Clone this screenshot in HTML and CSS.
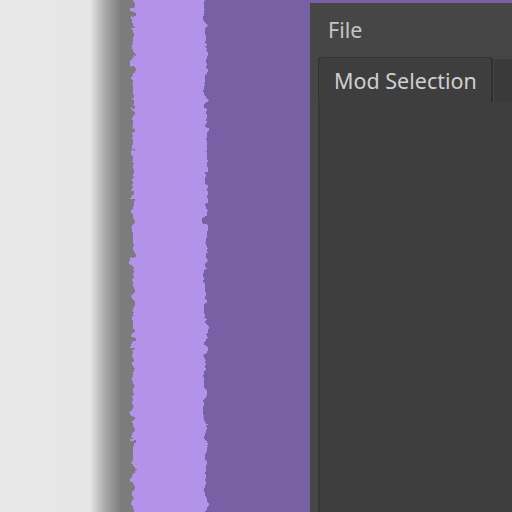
FILE: index.html
```html
<!DOCTYPE html>
<html>
<head>
<meta charset="utf-8">
<link rel="stylesheet" href="styles.css">
</head>
<body>
<div class="scene">
  <svg class="art" width="310" height="512" viewBox="0 0 310 512">
    <defs>
      <linearGradient id="sh" x1="0" y1="0" x2="310" y2="0" gradientUnits="userSpaceOnUse">
        <stop offset="0" stop-color="#e8e8e8"/>
        <stop offset="0.29" stop-color="#e6e6e6"/>
        <stop offset="0.34" stop-color="#a8a8a8"/>
        <stop offset="0.39" stop-color="#7c7c7c"/>
        <stop offset="1" stop-color="#7a7a7a"/>
      </linearGradient>
      <filter id="rough" x="-20%" y="-5%" width="140%" height="110%">
        <feTurbulence type="fractalNoise" baseFrequency="0.09 0.12" numOctaves="3" seed="4" result="n"/>
        <feDisplacementMap in="SourceGraphic" in2="n" scale="12" xChannelSelector="R" yChannelSelector="G"/>
      </filter>
    </defs>
    <rect x="0" y="0" width="310" height="512" fill="url(#sh)"/>
    <rect x="180" y="0" width="130" height="512" fill="#7760a3"/>
    <rect x="133" y="-20" width="73" height="552" fill="#b393ea" filter="url(#rough)"/>
  </svg>
  <div class="window">
    <div class="menubar"><span class="menu-item">File</span></div>
    <div class="tabs">
      <div class="tab active">Mod Selection</div>
      <div class="tab"></div>
    </div>
    <div class="panel"></div>
  </div>
</div>
</body>
</html>
```
FILE: styles.css
```css
html, body {
  margin: 0;
  padding: 0;
  background: #7760a3;
}
.scene {
  display: flex;
  width: 512px;
  height: 512px;
  overflow: hidden;
}
.art {
  display: block;
  flex: 0 0 310px;
}
.window {
  flex: 1;
  margin-top: 3px;
  background: #464646;
  display: flex;
  flex-direction: column;
  font-family: "Noto Sans", "Open Sans", sans-serif;
  min-width: 0;
}
.menubar {
  height: 54px;
  display: flex;
  align-items: center;
  padding-left: 18px;
  box-sizing: border-box;
  padding-bottom: 2px;
}
.menu-item {
  color: #c4c4c4;
  font-size: 21.5px;
}
.tabs {
  display: flex;
  padding-left: 8px;
  height: 45px;
  flex: 0 0 45px;
}
.tab {
  box-sizing: border-box;
  height: 45px;
  background: #3a3a3a;
  color: #cfcfcf;
  font-size: 21.5px;
  display: flex;
  align-items: center;
}
.tab.active {
  width: 175px;
  padding-left: 15px;
  background: #3e3e3e;
  border-top: 1px solid #333;
  border-left: 1px solid #333;
  border-right: 2px solid #2f2f2f;
  border-radius: 3px 3px 0 0;
}
.tab:not(.active) {
  flex: 1;
  margin-left: 1px;
  margin-top: 2px;
}
.panel {
  flex: 1;
  margin-left: 8px;
  background: #3e3e3e;
  border-left: 2px solid #363636;
}
```
